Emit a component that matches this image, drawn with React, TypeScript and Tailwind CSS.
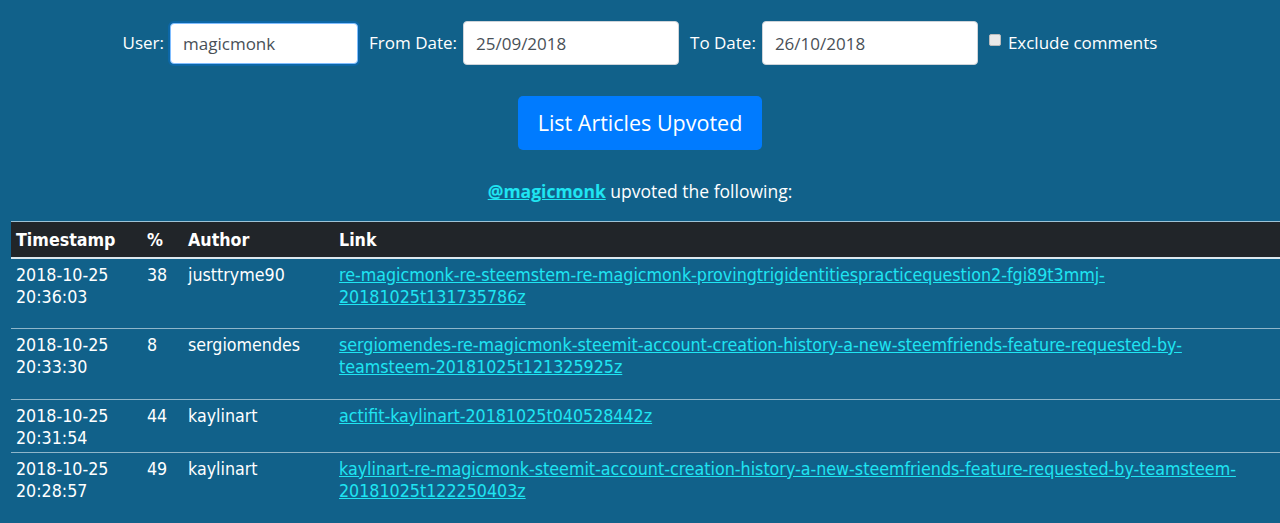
import React from "react";

const rows = [
  {
    date: "2018-10-25",
    time: "20:36:03",
    pct: "38",
    author: "justtryme90",
    link: "re-magicmonk-re-steemstem-re-magicmonk-provingtrigidentitiespracticequestion2-fgi89t3mmj-20181025t131735786z",
    tall: true,
  },
  {
    date: "2018-10-25",
    time: "20:33:30",
    pct: "8",
    author: "sergiomendes",
    link: "sergiomendes-re-magicmonk-steemit-account-creation-history-a-new-steemfriends-feature-requested-by-teamsteem-20181025t121325925z",
    tall: true,
  },
  {
    date: "2018-10-25",
    time: "20:31:54",
    pct: "44",
    author: "kaylinart",
    link: "actifit-kaylinart-20181025t040528442z",
    tall: false,
  },
  {
    date: "2018-10-25",
    time: "20:28:57",
    pct: "49",
    author: "kaylinart",
    link: "kaylinart-re-magicmonk-steemit-account-creation-history-a-new-steemfriends-feature-requested-by-teamsteem-20181025t122250403z",
    tall: true,
  },
];

const App = () => {
  return (
    <div className="min-h-[523px] w-full bg-[#11618a] text-white overflow-hidden">
      <div className="font-['Open_Sans','Noto_Sans',sans-serif] text-[17px]">
        <div className="flex items-center justify-center pt-[21px] h-[65px]">
          <span className="mr-[6px]">User:</span>
          <input
            defaultValue="magicmonk"
            className="w-[188px] h-[41px] rounded-[4px] bg-white border border-[#80bdff] shadow-[0_0_0_2px_rgba(0,123,255,0.25)] px-[12px] text-[#495057] outline-none"
          />
          <span className="ml-[11px] mr-[6px]">From Date:</span>
          <input
            defaultValue="25/09/2018"
            className="w-[216px] h-[44px] rounded-[4px] bg-white border border-[#ced4da] px-[12px] text-[#495057] outline-none"
          />
          <span className="ml-[11px] mr-[6px]">To Date:</span>
          <input
            defaultValue="26/10/2018"
            className="w-[216px] h-[44px] rounded-[4px] bg-white border border-[#ced4da] px-[12px] text-[#495057] outline-none"
          />
          <span className="ml-[11px] mr-[7px] -mt-[6px] w-[12px] h-[12px] rounded-[2px] bg-[#e9e9e9] border border-[#bbb]"></span>
          <span>Exclude comments</span>
        </div>

        <div className="flex justify-center mt-[31px]">
          <button className="w-[244px] h-[54px] rounded-[5px] bg-[#007bff] text-white text-[21.5px]">
            List Articles Upvoted
          </button>
        </div>

        <p className="text-center mt-[29px] leading-[24px] text-[17.5px]">
          <a className="text-[#1fe5f2] font-bold underline">@magicmonk</a> upvoted the following:
        </p>
      </div>

      <div className="pl-[11px] mt-[18px] font-['DejaVu_Sans_Condensed','Liberation_Sans_Narrow','DejaVu_Sans',sans-serif] text-[17.7px]">
        <table className="w-full border-collapse border-t border-[#9ec3d6]">
          <thead>
            <tr className="bg-[#212529] border-b-2 border-[#dde8ee] h-[36px]">
              <th className="text-left font-bold pl-[5px] pt-[2px] w-[136px]">Timestamp</th>
              <th className="text-left font-bold pt-[2px] w-[41px]">%</th>
              <th className="text-left font-bold pt-[2px] w-[151px]">Author</th>
              <th className="text-left font-bold pt-[2px]">Link</th>
            </tr>
          </thead>
          <tbody>
            {rows.map((r, i) => (
              <tr
                key={i}
                className={`border-b border-[#8fb6ca] align-top leading-[22px] ${r.tall ? "h-[71px]" : "h-[53px]"}`}
              >
                <td className="pl-[5px] pt-[5px]">
                  {r.date}
                  <br />
                  {r.time}
                </td>
                <td className="pt-[5px]">{r.pct}</td>
                <td className="pt-[5px]">{r.author}</td>
                <td className="pt-[5px] pr-[28px]">
                  <a className="text-[#1fe5f2] underline">{r.link}</a>
                </td>
              </tr>
            ))}
          </tbody>
        </table>
      </div>
    </div>
  );
};

export default App;
